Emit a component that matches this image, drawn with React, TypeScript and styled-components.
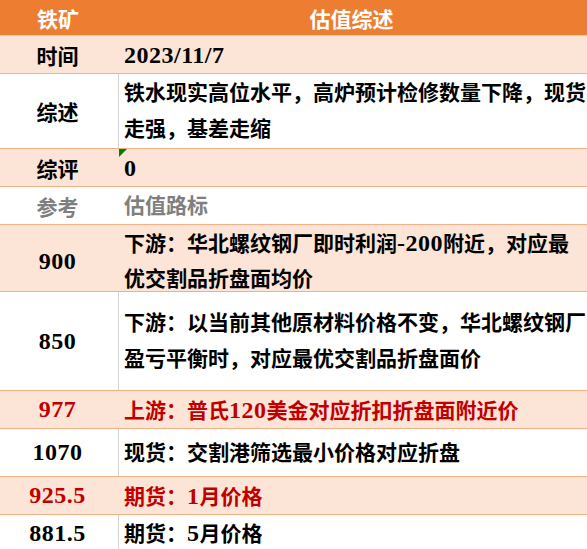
import styled, { createGlobalStyle } from 'styled-components';

type Tone = 'dark' | 'gray' | 'red';

interface RowData {
    label: string;
    lines: string[];
    height: number;
    peach?: boolean;
    divider?: boolean;
    tone?: Tone;
    note?: boolean;
}

const colors = {
    orange: '#ED7D31',
    peach: '#FCE4D6',
    border: '#F4B084',
    grid: '#D4D4D4',
    dark: '#000000',
    gray: '#7F7F7F',
    red: '#C00000',
    note: '#008000',
};

const rows: RowData[] = [
    { label: '时间', lines: ['2023/11/7'], height: 38, peach: true },
    { label: '综述', lines: ['铁水现实高位水平，高炉预计检修数量下降，现货', '走强，基差走缩'], height: 75, divider: true },
    { label: '综评', lines: ['0'], height: 38, peach: true, note: true },
    { label: '参考', lines: ['估值路标'], height: 38, tone: 'gray' },
    { label: '900', lines: ['下游：华北螺纹钢厂即时利润-200附近，对应最', '优交割品折盘面均价'], height: 67, peach: true },
    { label: '850', lines: ['下游：以当前其他原材料价格不变，华北螺纹钢厂', '盈亏平衡时，对应最优交割品折盘面价'], height: 99, divider: true },
    { label: '977', lines: ['上游：普氏120美金对应折扣折盘面附近价'], height: 38, peach: true, tone: 'red' },
    { label: '1070', lines: ['现货：交割港筛选最小价格对应折盘'], height: 48, divider: true },
    { label: '925.5', lines: ['期货：1月价格'], height: 38, peach: true, tone: 'red' },
    { label: '881.5', lines: ['期货：5月价格'], height: 34, divider: true },
];

// digits come from the serif latin face, a little larger than the CJK text
function withNums(text: string) {
    return text.split(/([0-9./-]+)/).map((part, i) =>
        /^[0-9./-]+$/.test(part) ? <Num key={i}>{part}</Num> : part
    );
}

const App = () => {
    return (
        <>
            <GlobalStyle />
            <Sheet>
                <HeaderRow>
                    <HeaderCell>铁矿</HeaderCell>
                    <HeaderCell>估值综述</HeaderCell>
                </HeaderRow>
                {rows.map((row) => (
                    <Row key={row.label} $height={row.height} $peach={row.peach}>
                        <LabelCell $tone={row.tone || 'dark'}>{withNums(row.label)}</LabelCell>
                        <ValueCell $tone={row.tone || 'dark'} $divider={row.divider}>
                            {row.note && <NoteMark />}
                            {row.lines.map((line, i) => (
                                <Line key={i}>{withNums(line)}</Line>
                            ))}
                        </ValueCell>
                    </Row>
                ))}
            </Sheet>
        </>
    );
};

const GlobalStyle = createGlobalStyle`
    html, body {
        margin: 0;
        padding: 0;
        background: #ffffff;
    }
    body {
        font-family: "Liberation Serif", "Noto Sans CJK SC", serif;
        font-weight: 700;
        font-size: 21px;
    }
`;

const Sheet = styled.div`
    width: 587px;
    height: 549px;
    overflow: hidden;
    display: flex;
    flex-direction: column;
`;

const HeaderRow = styled.div`
    display: grid;
    grid-template-columns: 118px 1fr;
    height: 36px;
    flex-shrink: 0;
    background: ${colors.orange};
    border-bottom: 1px solid #F8CBAD;
    box-sizing: border-box;
`;

const HeaderCell = styled.div`
    display: flex;
    align-items: center;
    justify-content: center;
    color: #ffffff;
    padding-right: 2px;
`;

const Row = styled.div<{ $height: number; $peach?: boolean }>`
    display: grid;
    grid-template-columns: 118px 1fr;
    height: ${(p) => p.$height}px;
    flex-shrink: 0;
    box-sizing: border-box;
    background: ${(p) => (p.$peach ? colors.peach : '#ffffff')};
    border-bottom: 1px solid ${colors.border};
    &:last-child {
        border-bottom: none;
    }
`;

const toneColor = (t: Tone) => (t === 'red' ? colors.red : t === 'gray' ? colors.gray : colors.dark);

const LabelCell = styled.div<{ $tone: Tone }>`
    display: flex;
    align-items: center;
    justify-content: center;
    padding-right: 3px;
    color: ${(p) => toneColor(p.$tone)};
    white-space: nowrap;
`;

const ValueCell = styled.div<{ $tone: Tone; $divider?: boolean }>`
    position: relative;
    display: flex;
    flex-direction: column;
    justify-content: center;
    padding-left: 5px;
    border-left: 1px solid ${(p) => (p.$divider ? colors.grid : 'transparent')};
    color: ${(p) => toneColor(p.$tone)};
    line-height: 36px;
    white-space: nowrap;
    overflow: visible;
`;

const Line = styled.div`
    height: 36px;
`;

const Num = styled.span`
    font-family: "Liberation Serif", serif;
    font-size: 24px;
    letter-spacing: 0.5px;
`;

const NoteMark = styled.span`
    position: absolute;
    top: 0;
    left: 0;
    width: 0;
    height: 0;
    border-top: 8px solid ${colors.note};
    border-right: 8px solid transparent;
`;

export default App;
